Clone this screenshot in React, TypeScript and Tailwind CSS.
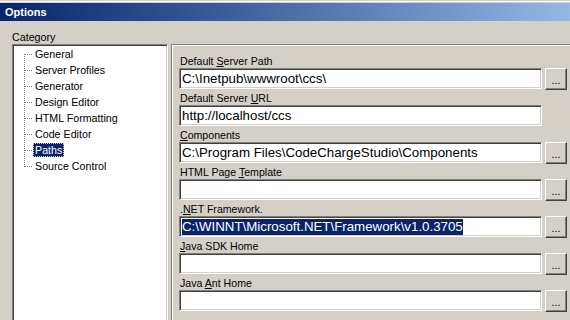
import React from "react";

const treeItems = [
  "General",
  "Server Profiles",
  "Generator",
  "Design Editor",
  "HTML Formatting",
  "Code Editor",
  "Paths",
  "Source Control",
];

function TreeRow({ label, index, last, selected }: { label: string; index: number; last: boolean; selected: boolean }) {
  return (
    <div className="flex h-[16px] items-center">
      <svg width="20" height="16" className="shrink-0" shapeRendering="crispEdges">
        <line
          x1="11.5"
          y1={index === 0 ? 8 : 0}
          x2="11.5"
          y2={last ? 9 : 16}
          stroke="#808080"
          strokeWidth="1"
          strokeDasharray="1 1"
        />
        <line x1="12" y1="8.5" x2="20" y2="8.5" stroke="#808080" strokeWidth="1" strokeDasharray="1 1" />
      </svg>
      <span
        className={
          selected
            ? "inline-block h-[14px] px-[2px] text-[10.7px] leading-[14px] bg-[#0a246a] text-white outline-1 outline-dotted outline-offset-[-1px] outline-[#d8d090]"
            : "inline-block h-[14px] px-[2px] text-[10.7px] leading-[14px] text-black"
        }
      >
        {label}
      </span>
    </div>
  );
}

function Label({ pre, u, post }: { pre: string; u: string; post: string }) {
  return (
    <div className="flex h-[16px] items-end pl-[1px] text-[10.6px] leading-[13px] text-black whitespace-pre">
      <span>
        {pre}
        <span className="underline underline-offset-[1px]">{u}</span>
        {post}
      </span>
    </div>
  );
}

function Field({
  pre,
  u,
  post,
  value,
  button,
  selected,
}: {
  pre: string;
  u: string;
  post: string;
  value?: string;
  button?: boolean;
  selected?: boolean;
}) {
  return (
    <div className="flex flex-col">
      <Label pre={pre} u={u} post={post} />
      <div className="flex h-[21px] items-start">
        <div className="flex h-[21px] w-[363px] items-center overflow-hidden whitespace-nowrap border border-t-[#808080] border-l-[#808080] border-b-white border-r-white bg-white pl-[2px] text-[13.3px] leading-[16px] text-black shadow-[inset_1px_1px_0_#404040,inset_-1px_-1px_0_#d4d0c8]">
          {value ? (
            selected ? (
              <span className="bg-[#0a246a] text-white">{value}</span>
            ) : (
              <span>{value}</span>
            )
          ) : null}
        </div>
        {button ? (
          <div className="ml-[3px] flex h-[22px] w-[22px] items-center justify-center border border-t-white border-l-white border-b-[#404040] border-r-[#404040] bg-[#d4d0c8] shadow-[inset_-1px_-1px_0_#808080] text-[11px] leading-[11px] text-black">
            <span className="mt-[2px]">...</span>
          </div>
        ) : null}
      </div>
    </div>
  );
}

export default function App() {
  return (
    <div
      className="relative h-[320px] w-[570px] overflow-hidden bg-[#d4d0c8] text-black"
      style={{ fontFamily: '"Liberation Sans", Arial, sans-serif' }}
    >
      <div className="h-[1px] bg-[#d4d0c8]" />
      <div className="h-[1px] bg-white" />
      <div className="h-[1px] bg-[#d4d0c8]" />
      <div className="flex h-[18px] items-center bg-linear-to-r from-[#0a246a] to-[#94b8e6] pl-[5px] text-[11px] font-bold leading-[13px] text-white">
        Options
      </div>
      <div className="flex pl-[12px]">
        <div className="flex w-[156px] shrink-0 flex-col pt-[10px]">
          <div className="h-[13px] text-[10.7px] leading-[13px]">Category</div>
          <div className="h-[300px] border border-t-[#808080] border-l-[#808080] border-b-white border-r-white bg-white pt-[1px] shadow-[inset_1px_1px_0_#404040,inset_-1px_-1px_0_#d4d0c8]">
            {treeItems.map((t, i) => (
              <TreeRow key={t} label={t} index={i} last={i === treeItems.length - 1} selected={t === "Paths"} />
            ))}
          </div>
        </div>
        <div className="ml-[3px] mt-[23px] h-[300px] flex-1 border-l border-t border-l-[#808080] border-t-[#808080] pl-[7px] pt-[7px] shadow-[inset_1px_1px_0_#ffffff]">
          <Field pre="Default " u="S" post="erver Path" value="C:\Inetpub\wwwroot\ccs\" button />
          <Field pre="Default Server " u="U" post="RL" value="http://localhost/ccs" />
          <Field pre="" u="C" post="omponents" value="C:\Program Files\CodeChargeStudio\Components" button />
          <Field pre="HTML Page " u="T" post="emplate" button />
          <Field pre="." u="N" post="ET Framework." value="C:\WINNT\Microsoft.NET\Framework\v1.0.3705" button selected />
          <Field pre="" u="J" post="ava SDK Home" button />
          <Field pre="Java " u="A" post="nt Home" button />
        </div>
      </div>
    </div>
  );
}
